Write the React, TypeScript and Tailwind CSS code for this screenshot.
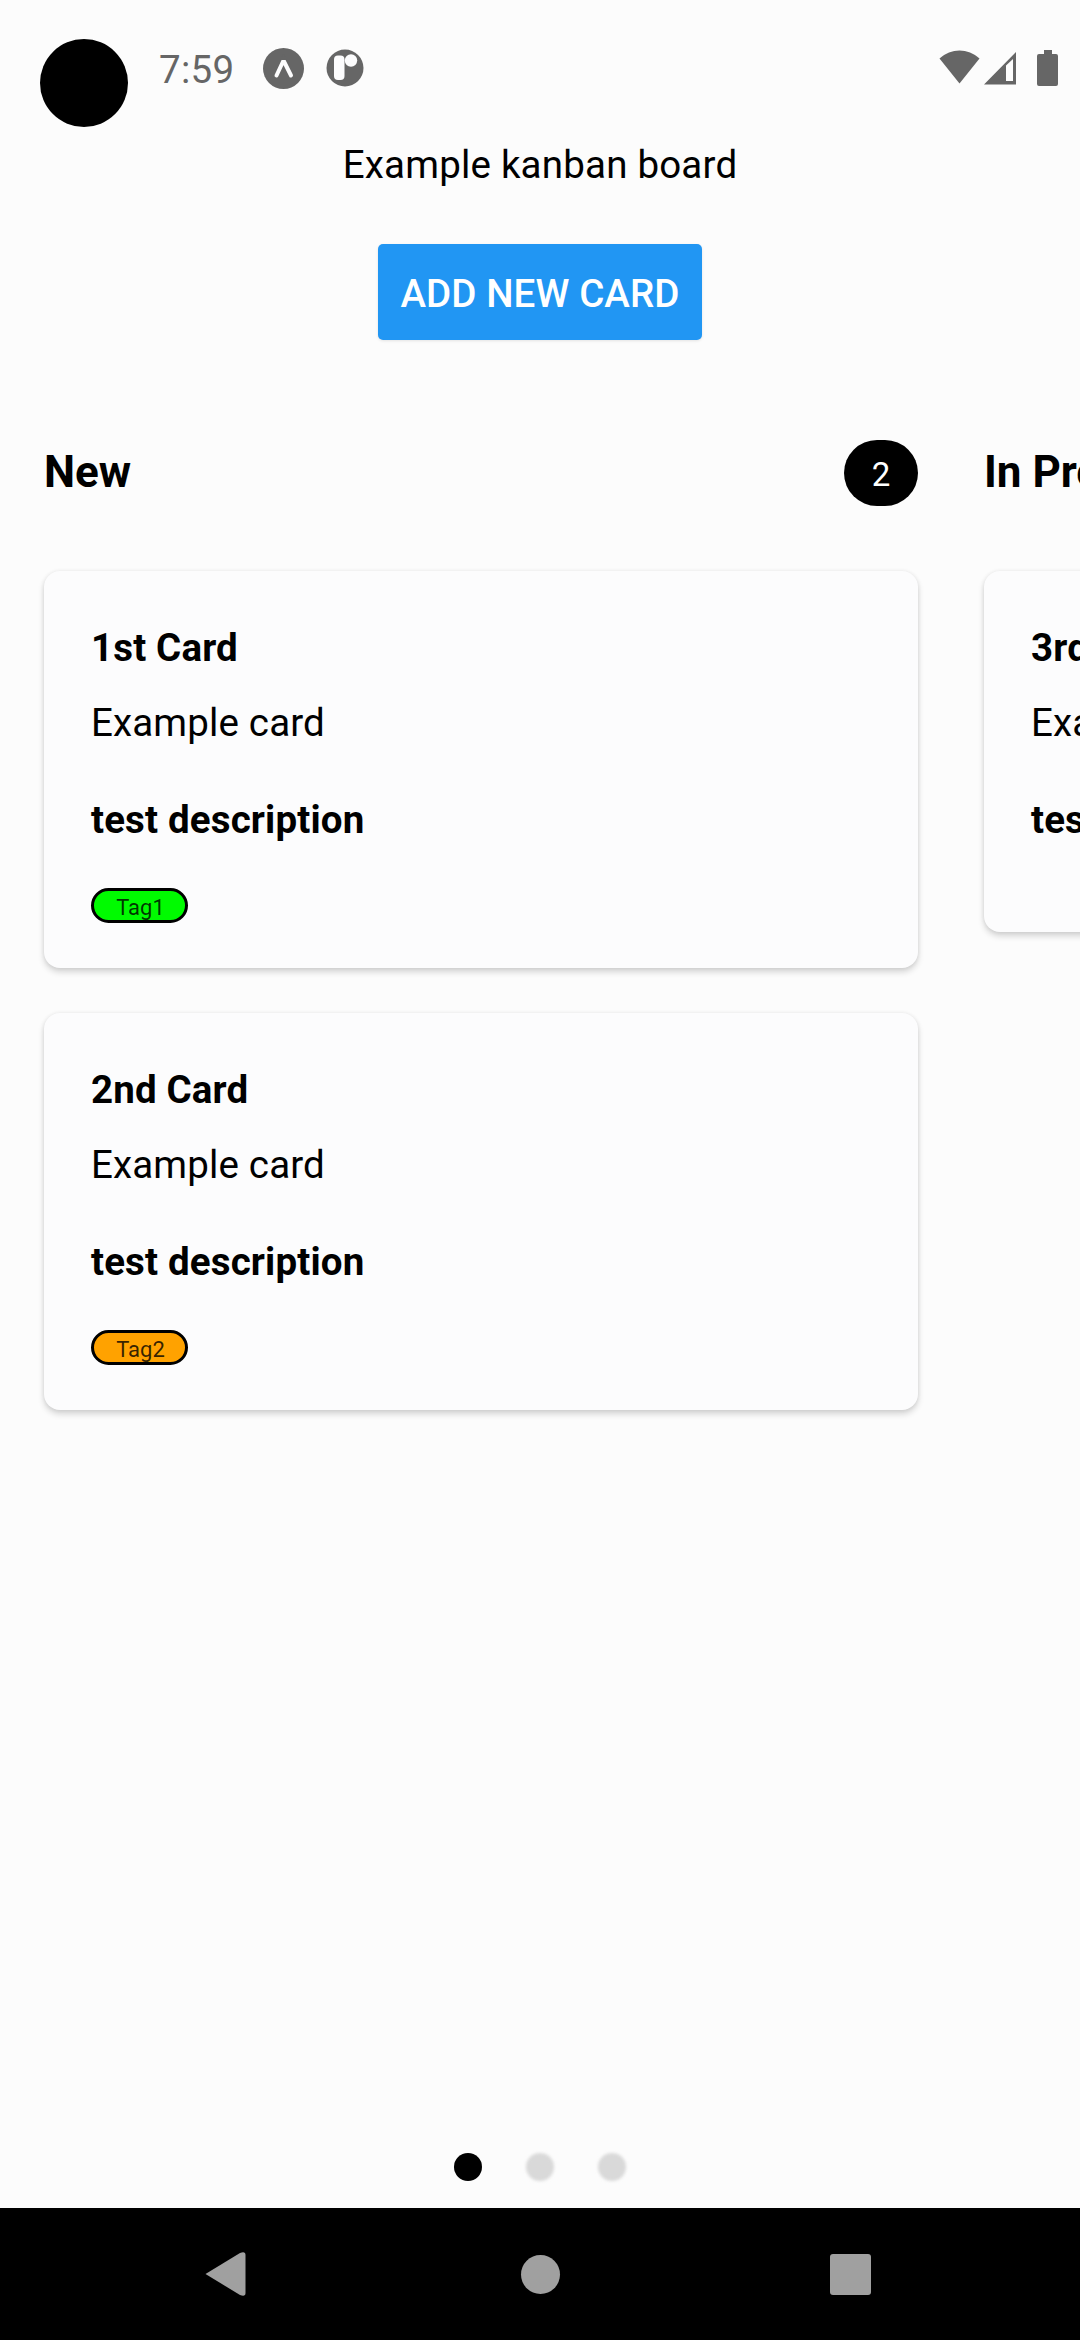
type CardData = { title: string; tag?: { label: string; className: string } };
type ColumnData = { title: string; count: number; cards: CardData[] };

const columns: ColumnData[] = [
  {
    title: "New",
    count: 2,
    cards: [
      { title: "1st Card", tag: { label: "Tag1", className: "bg-[#00fb00]" } },
      { title: "2nd Card", tag: { label: "Tag2", className: "bg-[#ffa200]" } },
    ],
  },
  { title: "In Progress", count: 1, cards: [{ title: "3rd Card" }] },
];

function StatusBar() {
  return (
    <header className="flex h-[142px] shrink-0 items-start pr-[22px] pl-10 text-[#666666]">
      <div className="mt-[39px] size-[88px] rounded-full bg-black" />
      <span className="mt-[47px] ml-[31px] w-[78px] text-[38.5px] leading-[45px] tracking-[0.3px]">7:59</span>
      <svg className="mt-[48px] ml-[26px] size-[41px]" viewBox="0 0 41 41">
        <circle cx="20.5" cy="20.5" r="20.5" fill="currentColor" />
        <path d="M13.5 27.500 L20.5 12.5 L28 27.500" fill="none" stroke="#fcfcfd" strokeWidth="4" strokeLinecap="round" strokeLinejoin="round" />
        <path d="M17 12 H24 L20.5 5.5 Z" fill="currentColor" />
      </svg>
      <svg className="mt-[49px] ml-[22px] size-[38px]" viewBox="0 0 38 38">
        <circle cx="19" cy="19" r="18.5" fill="currentColor" />
        <rect x="8" y="6.5" width="10.5" height="24.500" rx="4" fill="#fcfcfd" />
        <circle cx="25" cy="11.5" r="6.2" fill="#fcfcfd" />
      </svg>
      <svg className="mt-[50px] ml-auto h-[34px] w-[41px]" viewBox="0 0 41 34">
        <path d="M0.5 8.5 C12 -2.3 29 -2.3 40.500 8.500 L20.500 33.500 Z" fill="currentColor" />
      </svg>
      <svg className="mt-[51px] ml-[4px] h-[34px] w-[33px]" viewBox="0 0 33 34">
        <path d="M0 33.500 L32 1 V33.500 Z M22 14.500 V30 H29 V8 Z" fill="currentColor" fillRule="evenodd" />
      </svg>
      <svg className="mt-[50px] ml-[20px] h-[36px] w-[21px]" viewBox="0 0 21 36">
        <path d="M7 0 H15 V4 H19 Q21 4 21 6 V34 Q21 36 19 36 H2 Q0 36 0 34 V6 Q0 4 2 4 H7 Z" fill="currentColor" />
      </svg>
    </header>
  );
}

function Card({ title, tag }: CardData) {
  return (
    <article className="min-h-[361px] rounded-[16px] bg-[#fcfcfd] px-[47px] pt-[54px] pb-[45px] text-[38.5px] leading-[45px] tracking-[0.15px] whitespace-nowrap shadow-[0_4px_6px_rgba(0,0,0,0.16),0_0_4px_rgba(0,0,0,0.07)]">
      <h3 className="font-bold">{title}</h3>
      <p className="mt-[30px]">Example card</p>
      <p className="mt-[52px] font-bold">test description</p>
      {tag && (
        <div
          className={`mt-[46px] flex h-[35px] w-[97px] items-center justify-center rounded-full border-[3px] border-black pt-[5px] pl-[2px] text-[22px] leading-[26px] tracking-normal text-black/80 ${tag.className}`}
        >
          {tag.label}
        </div>
      )}
    </article>
  );
}

function Column({ title, count, cards }: ColumnData) {
  return (
    <section className="w-[874px] shrink-0">
      <div className="flex h-[66px] items-center justify-between">
        <h2 className="pb-[2px] text-[44px] leading-[52px] font-bold">{title}</h2>
        <span className="flex h-[66px] w-[74px] items-center justify-center rounded-[33px] bg-black pt-[3px] text-[33px] leading-[39px] text-white">
          {count}
        </span>
      </div>
      <div className="mt-[65px] flex flex-col gap-[45px]">
        {cards.map((card) => (
          <Card key={card.title} {...card} />
        ))}
      </div>
    </section>
  );
}

function NavigationBar() {
  return (
    <nav className="flex h-[132px] shrink-0 items-center bg-black pl-[205px] text-[#a0a0a0]">
      <svg className="h-[44px] w-[41px]" viewBox="0 0 41 44">
        <path d="M0.500 22 L35 1 Q40.500 -1 40.500 3 V41 Q40.500 45 35 43 Z" fill="currentColor" />
      </svg>
      <div className="ml-[275px] size-[39px] rounded-full bg-current" />
      <div className="ml-[270px] size-[41px] rounded-[3px] bg-current" />
    </nav>
  );
}

export default function App() {
  return (
    <div className="flex h-[2340px] w-[1080px] flex-col overflow-hidden bg-[#fcfcfc] font-['Roboto',sans-serif] text-black">
      <StatusBar />
      <h1 className="text-center text-[38.5px] leading-[45px] tracking-[0.2px]">Example kanban board</h1>
      <button className="mt-[57px] h-[96px] w-[324px] self-center rounded-[5px] bg-[#2196f3] pt-[3px] text-[38.5px] leading-[45px] font-medium tracking-[0.1px] whitespace-nowrap text-white shadow-[0_1px_3px_rgba(0,0,0,0.1)]">
        ADD NEW CARD
      </button>
      <main className="mt-[100px] flex flex-1 gap-[66px] overflow-hidden pl-[44px]">
        {columns.map((column) => (
          <Column key={column.title} {...column} />
        ))}
      </main>
      <div className="mb-[27px] flex shrink-0 justify-center gap-[44px]">
        <span className="size-[28px] rounded-full bg-black" />
        <span className="size-[28px] rounded-full bg-[#d9d9d9] blur-[1.5px]" />
        <span className="size-[28px] rounded-full bg-[#d9d9d9] blur-[1.5px]" />
      </div>
      <NavigationBar />
    </div>
  );
}
